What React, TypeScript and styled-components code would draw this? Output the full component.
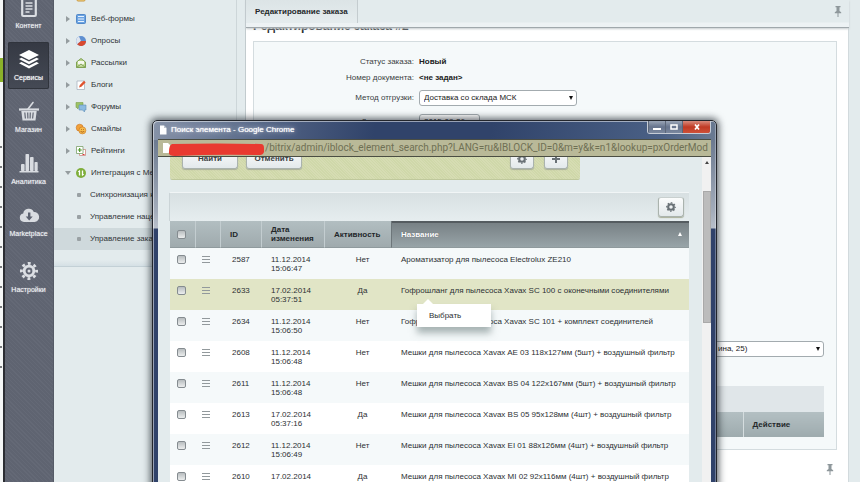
import React from "react";
import styled, { createGlobalStyle, css } from "styled-components";

const sans = `"Liberation Sans", Arial, sans-serif`;

const GlobalStyle = createGlobalStyle`
  *, *::before, *::after { box-sizing: border-box; }
  body { margin: 0; overflow: hidden; background: #e3ebed; color: #3b3f42; font: 8px/10px ${sans}; }
  button, input, select { font: inherit; color: inherit; }
`;

/* ---------- page shell ---------- */

const Page = styled.div`
  position: relative;
  display: flex;
  height: 100vh;
  overflow: hidden;
`;

const Desktop = styled.div`
  flex: none;
  width: 3px;
  background:
    linear-gradient(#8bb12a, #8bb12a) 0 58px / 3px 24px no-repeat,
    repeating-linear-gradient(transparent 0 14px, #77797c 14px 16px, transparent 16px 20px) 0 132px / 2px 250px no-repeat,
    #f4f6f6;
`;

/* ---------- dark rail ---------- */

const Rail = styled.nav`
  flex: none;
  display: flex;
  flex-direction: column;
  gap: 5px;
  width: 51px;
  padding: 0 4px 0 3px;
  border-left: 2px solid #2b2d33;
  border-right: 1px solid #565b67;
  background: repeating-linear-gradient(45deg, #646976 0 1px, #5f6471 1px 3px);
  overflow: hidden;
`;

const RailLink = styled.a<{ $active?: boolean; $apart?: boolean }>`
  flex: none;
  display: flex;
  flex-direction: column;
  align-items: center;
  gap: 3px;
  height: 47px;
  padding-top: 6px;
  border-radius: 2px;
  color: #eef0f3;
  font: 7px/10px ${sans};
  text-decoration: none;
  text-shadow: 0 0 1px #c9ccd3;
  &:first-child { margin-top: -10px; }
  ${(p) => p.$apart && css`margin-top: 4px;`}
  ${(p) =>
    p.$active &&
    css`
      color: #fff;
      background: linear-gradient(#353943, #454a55);
      box-shadow: inset 0 0 0 1px #30343c;
    `}
  svg { display: block; width: 22px; height: 22px; }
`;

/* ---------- menu tree ---------- */

const Menu = styled.nav`
  flex: none;
  width: 183px;
  border-right: 1px solid #cdd6d9;
  overflow: hidden;
`;

const Tree = styled.ul`
  margin: -14px 0 0;
  padding: 0 0 16px;
  list-style: none;
  border-bottom: 1px solid #c3d0d6;
  background: linear-gradient(#e3ebed calc(100% - 6px), #d5e0e5);
`;

const TreeItem = styled.li<{ $sub?: boolean; $selected?: boolean }>`
  height: 22px;
  background: ${(p) => (p.$selected ? "#cfd9dc" : "none")};
  a {
    display: grid;
    grid-template-columns: ${(p) => (p.$sub ? "6px 1fr" : "6px 10px 1fr")};
    column-gap: ${(p) => (p.$sub ? "7px" : "5px")};
    align-items: center;
    height: 22px;
    padding-left: ${(p) => (p.$sub ? "23px" : "11px")};
    color: #303437;
    text-decoration: none;
    white-space: nowrap;
  }
  svg { display: block; overflow: visible; }
`;

const Bullet = styled.span`
  width: 4px;
  height: 4px;
  border-radius: 1px;
  background: #9aa1a4;
`;

/* ---------- order editor ---------- */

const Main = styled.main`
  flex: 1;
  display: flex;
  flex-direction: column;
  min-width: 0;
  margin: 0 11px 0 8px;
  border-left: 1px solid #c2cbce;
`;

const TabBar = styled.header`
  flex: none;
  display: flex;
  justify-content: space-between;
  height: 28px;
  border-bottom: 1px solid #a0a8ac;
  background: linear-gradient(#e3ebed 22px, #edf2f4 23px);
  box-shadow: 0 1px 2px #c5cbce;
  z-index: 1;
`;

const Tab = styled.button`
  height: 23px;
  padding: 0 9px;
  border: 0;
  border-right: 1px solid #c4cccf;
  background: linear-gradient(#dce4e6, #e5ecee);
  color: #25282a;
  font-weight: bold;
`;

const PinButton = styled.button`
  display: block;
  width: 12px;
  height: 14px;
  margin: 4px 5px;
  padding: 0;
  border: 0;
  background: none;
  svg { display: block; }
`;

const Sheet = styled.section`
  flex: 1;
  min-height: 0;
  padding: 0 11px 0 7px;
  background: #fff;
  border-right: 1px solid #d2dadd;
  overflow: hidden;
`;

const Title = styled.h1`
  margin: -9px 0 8px;
  color: #2c2f31;
  font: bold 12px/14px ${sans};
`;

const Card = styled.div`
  display: flex;
  flex-direction: column;
  justify-content: space-between;
  height: 409px;
  padding: 12px 12px 12px 0;
  border: 1px solid #d4dcdf;
  background: #f5f9fa;
`;

const Fields = styled.div`
  display: grid;
  grid-template-columns: 160px max-content;
  grid-template-rows: 16px 16px 24px 24px;
  column-gap: 5px;
  align-items: center;
`;

const Label = styled.label`
  text-align: right;
`;

const Value = styled.b`
  color: #222;
`;

const SelectBox = styled.span<{ $fill?: boolean }>`
  position: relative;
  display: block;
  justify-self: start;
  ${(p) => p.$fill && css`margin-left: 405px;`}
  &::after {
    content: "";
    position: absolute;
    right: 4px;
    top: 6px;
    border: 2px solid transparent;
    border-top: 4px solid #111;
    border-bottom: 0;
  }
  select {
    display: block;
    width: ${(p) => (p.$fill ? "100%" : "auto")};
    height: 16px;
    padding: 0 14px 0 ${(p) => (p.$fill ? "58px" : "4px")};
    border: 1px solid #a3abaf;
    border-radius: 3px;
    background: #fff;
    color: #222;
    appearance: none;
  }
`;

const Wide = styled.span`
  select { width: 158px; }
`;

const Bottom = styled.div`
  display: flex;
  flex-direction: column;
  gap: 29px;
`;

const Goods = styled.table`
  width: calc(100% - 12px);
  margin-left: 12px;
  border-collapse: collapse;
  caption { height: 26px; background: #e0e6e9; }
  th {
    height: 25px;
    padding: 0 9px;
    background: linear-gradient(#b3bfc2, #9eabae);
    color: #25292b;
    font-weight: bold;
    text-align: left;
  }
  th + th { width: 81px; border-left: 1px solid #d5dddf; }
`;

const FooterPin = styled.div`
  display: flex;
  justify-content: flex-end;
  padding: 8px 0 0;
  margin-right: -4px;
`;

/* ---------- browser window ---------- */

const Window = styled.section`
  position: absolute;
  z-index: 2;
  top: 120px;
  left: 152px;
  right: 143px;
  bottom: -20px;
  display: flex;
  flex-direction: column;
  padding: 0 5px;
  border: 1px solid #23262c;
  border-radius: 5px 5px 0 0;
  background:
    linear-gradient(100deg, #8793a8 0, #4d5e80 130px, #30436a 220px, #30436a 60%, #4a6085 90%, #6b7b92 100%) 0 0 / 100% 19px no-repeat,
    linear-gradient(#6c7a90 19px, #a3acba 90px, #b8bfca 107px, #30426a 108px);
  box-shadow: 0 0 7px 2px rgba(20, 28, 36, 0.65), inset 1px 1px 0 rgba(255, 255, 255, 0.5), inset -1px 0 0 rgba(255, 255, 255, 0.3);
`;

const TitleBar = styled.header`
  flex: none;
  display: flex;
  align-items: center;
  gap: 4px;
  height: 18px;
  padding-left: 1px;
  color: #fff;
  svg { display: block; }
`;

const WindowTitle = styled.span`
  text-shadow: 0 0 1px #fff, 0 0 4px #b7c2d4, 0 0 8px #a4b1c8;
`;

const Controls = styled.div`
  display: flex;
  align-self: flex-start;
  margin-left: auto;
  border: 1px solid #c6ccd6;
  border-top: 0;
  border-radius: 0 0 3px 3px;
  overflow: hidden;
`;

const Control = styled.button<{ $close?: boolean }>`
  display: flex;
  align-items: center;
  justify-content: center;
  width: ${(p) => (p.$close ? "28px" : "17px")};
  height: 12px;
  padding: 0;
  border: 0;
  border-left: 1px solid #5c6779;
  background: ${(p) => (p.$close ? "linear-gradient(#d98b7c, #c03a24 50%, #cf5138)" : "linear-gradient(#9aa5b6, #66748d 50%, #7b889e)")};
`;

const Address = styled.div`
  flex: none;
  display: flex;
  align-items: center;
  height: 18px;
  padding-left: 4px;
  border: solid #4b4e43;
  border-width: 1px 0;
  background: #b9b998;
  color: #6f7054;
  font: 10px/14px Roboto, "Noto Sans", sans-serif;
  white-space: nowrap;
  overflow: hidden;
  svg { flex: none; }
`;

const Viewport = styled.div`
  flex: 1;
  display: flex;
  min-height: 0;
  background: #e3ebed;
  overflow: hidden;
`;

const Content = styled.div`
  flex: 1;
  min-width: 0;
  padding: 0 13px 0 12px;
`;

const Filter = styled.div`
  display: flex;
  gap: 8px;
  width: 79%;
  height: 22px;
  padding: 0 12px;
  border-radius: 0 0 2px 2px;
  background: repeating-linear-gradient(45deg, #d6dcb3 0 1px, #cfd8a9 1px 2px);
  box-shadow: 0 1px 0 #bfc89c;
`;

const PushButton = styled.button<{ $icon?: boolean }>`
  display: flex;
  align-items: center;
  justify-content: center;
  width: ${(p) => (p.$icon ? "24px" : "56px")};
  height: 20px;
  margin-top: -8px;
  padding: 0;
  border: 1px solid #aab3ae;
  border-top-color: #c9d0cf;
  border-radius: 3px;
  background: linear-gradient(#fbfcfc, #e3e9eb);
  box-shadow: 0 1px 1px #aab09a;
  color: #3c4144;
  font-weight: bold;
  svg { display: block; }
`;

const FilterTools = styled.div`
  display: flex;
  gap: 10px;
  margin-left: auto;
`;

const GridTools = styled.div`
  display: flex;
  align-items: center;
  justify-content: flex-end;
  height: 28px;
  margin-top: 14px;
  padding-right: 5px;
  background: linear-gradient(#d8e0e2, #e6edef);
  box-shadow: 0 -1px 0 #f1f5f6, -1px 0 0 #cbd4d7;
  ${PushButton} { width: 26px; margin-top: 0; }
`;

const Grid = styled.table`
  width: 100%;
  table-layout: fixed;
  border-collapse: separate;
  border-spacing: 0;
  background: #fff;
  line-height: 9px;
  col:nth-child(1) { width: 25px; }
  col:nth-child(2) { width: 25px; }
  col:nth-child(3) { width: 41px; }
  col:nth-child(4) { width: 63px; }
  col:nth-child(5) { width: 67px; }
`;

const Head = styled.th<{ $sorted?: boolean }>`
  height: 27px;
  padding: 0 0 0 9px;
  border-left: 1px solid #c3cdd0;
  border-bottom: 1px solid #8f9a9d;
  background: linear-gradient(#b2bec1, #9faaad);
  color: #23272a;
  text-align: left;
  &:first-child { padding-left: 7px; border-left: 0; }
  ${(p) =>
    p.$sorted &&
    css`
      border-left-color: #6d767a;
      background: linear-gradient(#555c60 2px, #788185 2px, #98a4a8);
      color: #fff;
    `}
`;

const SortButton = styled.button`
  display: flex;
  align-items: center;
  justify-content: space-between;
  width: 100%;
  padding: 0 7px 0 0;
  border: 0;
  background: none;
  font-weight: bold;
  text-shadow: 0 0 1px #4c5559;
  &::after {
    content: "";
    border: 2px solid transparent;
    border-bottom: 4px solid #fff;
    border-top: 0;
  }
`;

const Row = styled.tr<{ $selected?: boolean }>`
  height: 31px;
  &:nth-child(odd) { background: #f5f9fa; }
  ${(p) => p.$selected && css`&& { background: #e1e5c6; }`}
`;

const Cell = styled.td<{ $align?: string }>`
  position: relative;
  padding: 7px 0 0 10px;
  color: #2c3033;
  text-align: ${(p) => p.$align ?? "left"};
  vertical-align: top;
  &:first-child { padding-left: 7px; }
  &:nth-child(2) { padding-left: 7px; }
  &:nth-child(3) { padding-left: 12px; }
  white-space: nowrap;
`;

const Check = styled.input`
  display: block;
  width: 9px;
  height: 9px;
  margin: 0;
  border: 1px solid #858c90;
  border-radius: 2px;
  background: linear-gradient(#b8bdbf, #eceeee);
  appearance: none;
`;

const RowMenu = styled.button`
  display: block;
  width: 8px;
  height: 8px;
  margin-top: 1px;
  padding: 0;
  border: 0;
  background: repeating-linear-gradient(#92999c 0 1px, transparent 1px 3px);
`;

const Popover = styled.div`
  position: absolute;
  z-index: 1;
  top: 25px;
  left: 26px;
  width: 74px;
  background: #fff;
  box-shadow: 0 6px 7px rgba(90, 110, 110, 0.5);
  &::before {
    content: "";
    position: absolute;
    top: -5px;
    left: 6px;
    border: 5px solid transparent;
    border-bottom-color: #fff;
    border-top: 0;
  }
  button {
    display: block;
    width: 100%;
    height: 23px;
    padding: 0 12px;
    border: 0;
    background: none;
    text-align: left;
  }
`;

const ScrollTrack = styled.div`
  flex: none;
  display: flex;
  flex-direction: column;
  align-items: center;
  gap: 27px;
  width: 9px;
  padding-top: 4px;
  background: #f1f1f1;
  &::before {
    content: "";
    border: 2px solid transparent;
    border-bottom: 3px solid #444;
    border-top: 0;
  }
`;

const Thumb = styled.div`
  width: 8px;
  height: 132px;
  background: #bcbcbc;
  border: 1px solid #a9a9a9;
`;

/* ---------- drawings ---------- */

const Pin = () => (
  <svg width="12" height="14" viewBox="0 0 12 14" fill="#8e979b">
    <path d="M3.5 2h5v1.2h-1V7l1.7 1.3v1H2.8v-1L4.5 7V3.2h-1zM5.5 9h1v4h-1z" />
  </svg>
);

const Gear = () => (
  <svg width="10" height="10" viewBox="0 0 22 22" fill="none" stroke="#697176">
    <circle cx="11" cy="11" r="6.2" strokeWidth="4.6" />
    <circle cx="11" cy="11" r="9.4" strokeWidth="2.6" strokeDasharray="3.6 3.783" strokeDashoffset="1.8" />
  </svg>
);

const PageIcon = () => (
  <svg width="8" height="10" viewBox="0 0 8 10">
    <path d="M1 .5h4L7.5 3v6.5H1z" fill="#fff" />
    <path d="M5 .5V3h2.5z" fill="#bcc3cd" />
  </svg>
);

const railIcons: Record<string, React.ReactNode> = {
  content: (
    <svg viewBox="0 0 22 22">
      <rect x="4.2" y="2" width="13.6" height="18" rx="1" fill="none" stroke="#dadde2" strokeWidth="2.2" />
      <path d="M7.5 7h7M7.5 10h7M7.5 13h7M7.5 16h4" stroke="#dadde2" strokeWidth="1.4" />
    </svg>
  ),
  services: (
    <svg viewBox="0 0 22 22" fill="#fff">
      <path d="M11 2l10 5-10 5L1 7z" />
      <path d="M1 11l2.500-1.300L11 13.500l7.500-3.800L21 11l-10 5.200z" />
      <path d="M1 15.200l2.500-1.300L11 17.700l7.500-3.800 2.500 1.300-10 5.200z" />
    </svg>
  ),
  shop: (
    <svg viewBox="0 0 22 22" fill="none" stroke="#d9dce1">
      <path d="M1 9.500h20" strokeWidth="2.2" />
      <path d="M10 9l5-6.500" strokeWidth="1.6" strokeLinecap="round" />
      <path d="M3.300 11h15.400l-1.200 9.500h-13z" fill="#d9dce1" stroke="none" />
      <path d="M6.800 12.500l.6 6M9.700 12.500l.2 6M12.300 12.500l-.2 6M15.200 12.500l-.6 6" stroke="#626774" strokeWidth="1.2" />
    </svg>
  ),
  stats: (
    <svg viewBox="0 0 22 22" fill="#d9dce1">
      <rect x="3" y="12" width="3.6" height="7" rx=".8" />
      <rect x="7.5" y="2" width="3.6" height="17" rx=".8" />
      <rect x="12" y="5" width="3.6" height="14" rx=".8" />
      <rect x="16.500" y="10" width="3.2" height="9" rx=".8" />
      <path d="M1.500 19h19v1.500h-19z" />
    </svg>
  ),
  market: (
    <svg viewBox="0 0 22 22">
      <path d="M6 18a4.300 4.300 0 0 1-.8-8.500A5.600 5.600 0 0 1 15.800 8 5 5 0 0 1 16.500 18z" fill="#d9dce1" />
      <path d="M10 8.500h2.400v4h2.300L11.200 16.500 7.700 12.500H10z" fill="#5d6270" />
    </svg>
  ),
  settings: (
    <svg viewBox="0 0 22 22" fill="none" stroke="#dcdfe4">
      <circle cx="11" cy="11" r="4.8" strokeWidth="2.8" />
      <circle cx="11" cy="11" r="7.6" strokeWidth="2.8" strokeDasharray="2.900 3.069" strokeDashoffset="1.450" />
      <circle cx="11" cy="11" r="1.5" fill="#dcdfe4" stroke="none" />
    </svg>
  ),
};

const treeIcons: Record<string, React.ReactNode> = {
  plain: (
    <>
      <rect x="1" y="1" width="8" height="8" rx="1" fill="#f6dc8c" stroke="#c9953c" />
      <path d="M3 4h6" stroke="#fff" />
    </>
  ),
  forms: (
    <>
      <rect x=".5" y=".5" width="9" height="9" rx="1" fill="#6ba3e2" stroke="#5288c8" />
      <path d="M2 2.500h6M2 5h6M2 7.500h6" stroke="#e8f2fd" strokeWidth="1.2" />
    </>
  ),
  polls: (
    <>
      <circle cx="5" cy="5" r="5" fill="#5f8fd0" />
      <path d="M5 5L3 .5A5 5 0 0 0 1.200 8.200z" fill="#dfe5ef" />
      <path d="M5 5h5A5 5 0 0 1 1.200 8.200z" fill="#d8492f" />
    </>
  ),
  mail: (
    <>
      <path d="M.5 4L5 .5 9.500 4v5.500h-9z" fill="#b9d28d" stroke="#7fa252" />
      <path d="M2 3h6v3L5 7.500 2 6z" fill="#f6f8ee" />
      <path d="M.5 9.500L5 6l4.500 3.500" fill="none" stroke="#7fa252" />
    </>
  ),
  blogs: (
    <>
      <path d="M1 1h7.500v8.500H1z" fill="#fff" stroke="#a9b4c0" strokeWidth=".8" />
      <path d="M3 7.500L3.800 5 8 .8 9.600 2.500 5.400 6.700z" fill="#e0532f" />
    </>
  ),
  forums: (
    <>
      <path d="M0 .5h7v5H3L1.500 7V5.500H0z" fill="#9cc264" stroke="#7c9f4b" strokeWidth=".6" />
      <path d="M3 3h7v5H8.500v2L6.500 8H3z" fill="#8cbbe0" stroke="#5e8fb9" strokeWidth=".6" />
    </>
  ),
  smiles: (
    <>
      <circle cx="3.7" cy="3.7" r="3.5" fill="#f2a23a" stroke="#c97425" strokeWidth=".6" />
      <circle cx="6.4" cy="6.4" r="3.5" fill="#f6bd4d" stroke="#c97425" strokeWidth=".6" />
      <path d="M4.600 7a2 2 0 0 0 3.600 0" fill="none" stroke="#9c4b12" strokeWidth=".8" />
      <path d="M5.100 5h.8v.8h-.8zM7 5h.8v.8H7z" fill="#9c4b12" />
    </>
  ),
  ratings: (
    <>
      <path d="M3.500 3.500h6v6h-6z" fill="#fff" stroke="#c98c84" strokeWidth=".8" />
      <path d="M.5.5h6.500v7H.5z" fill="#fff" stroke="#7c9f6a" strokeWidth=".8" />
      <path d="M3.700 2v4M1.800 4h4" stroke="#4f9a2c" strokeWidth="1.2" />
      <path d="M6.500 8.500h2" stroke="#d33" />
    </>
  ),
  sync: (
    <>
      <circle cx="5" cy="5" r="5" fill="#7fae3b" />
      <path d="M3.500 2.500v5M6.500 2.500v5" stroke="#fff" strokeWidth="1.3" />
      <path d="M2.300 4l1.200-1.500M7.700 6L6.500 7.500" stroke="#fff" />
    </>
  ),
};

/* ---------- data ---------- */

const rail = [
  { icon: "content", text: "Контент" },
  { icon: "services", text: "Сервисы" },
  { icon: "shop", text: "Магазин" },
  { icon: "stats", text: "Аналитика" },
  { icon: "market", text: "Marketplace" },
  { icon: "settings", text: "Настройки" },
];

const tree = [
  { icon: "plain", text: "Валюты" },
  { icon: "forms", text: "Веб-формы" },
  { icon: "polls", text: "Опросы" },
  { icon: "mail", text: "Рассылки" },
  { icon: "blogs", text: "Блоги" },
  { icon: "forums", text: "Форумы" },
  { icon: "smiles", text: "Смайлы" },
  { icon: "ratings", text: "Рейтинги" },
  { icon: "sync", text: "Интеграция с Ме", open: true },
];

const subtree = ["Синхронизация к", "Управление наце", "Управление зака"];

const items = [
  { id: 2587, date: "11.12.2014", time: "15:06:47", active: "Нет", name: "Ароматизатор для пылесоса Electrolux ZE210" },
  { id: 2633, date: "17.02.2014", time: "05:37:51", active: "Да", name: "Гофрошланг для пылесоса Xavax SC 100 с оконечными соединителями" },
  { id: 2634, date: "11.12.2014", time: "15:06:50", active: "Нет", name: "Гофрошланг для пылесоса Xavax SC 101 + комплект соединителей" },
  { id: 2608, date: "11.12.2014", time: "15:06:48", active: "Нет", name: "Мешки для пылесоса Xavax AE 03 118х127мм (5шт) + воздушный фильтр" },
  { id: 2611, date: "11.12.2014", time: "15:06:48", active: "Нет", name: "Мешки для пылесоса Xavax BS 04 122х167мм (5шт) + воздушный фильтр" },
  { id: 2613, date: "17.02.2014", time: "05:37:16", active: "Да", name: "Мешки для пылесоса Xavax BS 05 95х128мм (4шт) + воздушный фильтр" },
  { id: 2612, date: "11.12.2014", time: "15:06:49", active: "Нет", name: "Мешки для пылесоса Xavax EI 01 88х126мм (4шт) + воздушный фильтр" },
  { id: 2610, date: "17.02.2014", time: "", active: "Да", name: "Мешки для пылесоса Xavax MI 02 92х116мм (4шт) + воздушный фильтр" },
];

const SearchWindow = () => (
  <Window aria-label="Поиск элемента">
    <TitleBar>
      <PageIcon />
      <WindowTitle>Поиск элемента - Google Chrome</WindowTitle>
      <Controls>
        <Control aria-label="Свернуть">
          <svg width="8" height="8"><path d="M0 5h8v2H0z" fill="#fff" /></svg>
        </Control>
        <Control aria-label="Развернуть">
          <svg width="8" height="8"><rect x="1" y="2" width="6" height="4" fill="none" stroke="#fff" strokeWidth="1.5" /></svg>
        </Control>
        <Control $close aria-label="Закрыть">
          <svg width="8" height="8"><path d="M2 1.500l4 5M6 1.500l-4 5" stroke="#fff" strokeWidth="1.7" /></svg>
        </Control>
      </Controls>
    </TitleBar>
    <Address>
      <svg width="103" height="16" viewBox="0 0 103 16">
        <path d="M1 3h5l2 2v8H1z" fill="#fff" />
        <path d="M10 4q44-1 89 0 3 0 3 4v4q-1 3-4 3-45-1-85 1-7 0-6-4 0-7 3-8z" fill="#e93a30" />
      </svg>
      /bitrix/admin/iblock_element_search.php?LANG=ru&amp;IBLOCK_ID=0&amp;m=y&amp;k=n1&amp;lookup=pxOrderMod
    </Address>
    <Viewport>
      <Content>
        <Filter>
          <PushButton>Найти</PushButton>
          <PushButton>Отменить</PushButton>
          <FilterTools>
            <PushButton $icon aria-label="Настроить фильтр"><Gear /></PushButton>
            <PushButton $icon aria-label="Добавить условие">
              <svg width="10" height="10"><path d="M5 1v8M1 5h8" stroke="#697176" strokeWidth="2" /></svg>
            </PushButton>
          </FilterTools>
        </Filter>
        <GridTools>
          <PushButton $icon aria-label="Настроить список"><Gear /></PushButton>
        </GridTools>
        <Grid>
          <colgroup><col /><col /><col /><col /><col /><col /></colgroup>
          <thead>
            <tr>
              <Head><Check type="checkbox" aria-label="Выбрать все" /></Head>
              <Head />
              <Head>ID</Head>
              <Head>Дата<br />изменения</Head>
              <Head>Активность</Head>
              <Head $sorted aria-sort="ascending"><SortButton>Название</SortButton></Head>
            </tr>
          </thead>
          <tbody>
            {items.map((item) => {
              const selected = item.id === 2633;
              return (
                <Row key={item.id} $selected={selected}>
                  <Cell><Check type="checkbox" aria-label={String(item.id)} /></Cell>
                  <Cell><RowMenu aria-label="Действия" /></Cell>
                  <Cell>{item.id}</Cell>
                  <Cell>{item.date}<br />{item.time}</Cell>
                  <Cell $align="center">{item.active}</Cell>
                  <Cell>
                    {item.name}
                    {selected && <Popover><button>Выбрать</button></Popover>}
                  </Cell>
                </Row>
              );
            })}
          </tbody>
        </Grid>
      </Content>
      <ScrollTrack><Thumb /></ScrollTrack>
    </Viewport>
  </Window>
);

export default function App() {
  return (
    <Page>
      <GlobalStyle />
      <Desktop />
      <Rail>
        {rail.map((r) => (
          <RailLink key={r.icon} href="#" $active={r.icon === "services"} $apart={r.icon === "settings"}>
            {railIcons[r.icon]}
            {r.text}
          </RailLink>
        ))}
      </Rail>
      <Menu>
        <Tree>
          {tree.map((t) => (
            <TreeItem key={t.text}>
              <a href="#">
                <svg width="6" height="6" viewBox="0 0 6 6" fill="#959c9f">
                  <path d={t.open ? "M0 1h6L3 5z" : "M1 0l4 3-4 3z"} />
                </svg>
                <svg width="10" height="10" viewBox="0 0 10 10">{treeIcons[t.icon]}</svg>
                {t.text}
              </a>
            </TreeItem>
          ))}
          {subtree.map((text) => (
            <TreeItem key={text} $sub $selected={text === "Управление зака"}>
              <a href="#"><Bullet />{text}</a>
            </TreeItem>
          ))}
        </Tree>
      </Menu>
      <Main>
        <TabBar>
          <Tab>Редактирование заказа</Tab>
          <PinButton aria-label="Закрепить вкладки"><Pin /></PinButton>
        </TabBar>
        <Sheet>
          <Title>Редактирование заказа #2</Title>
          <Card>
            <Fields>
              <Label as="span">Статус заказа:</Label>
              <Value>Новый</Value>
              <Label as="span">Номер документа:</Label>
              <Value>&lt;не задан&gt;</Value>
              <Label htmlFor="method">Метод отгрузки:</Label>
              <Wide>
                <SelectBox>
                  <select id="method"><option>Доставка со склада МСК</option></select>
                </SelectBox>
              </Wide>
              <Label htmlFor="date">Дата отгрузки:</Label>
              <SelectBox>
                <select id="date"><option>2015-09-26</option></select>
              </SelectBox>
            </Fields>
            <Bottom>
              <SelectBox $fill>
                <select aria-label="Адрес"><option>ина, 25)</option></select>
              </SelectBox>
              <Goods>
                <caption />
                <thead><tr><th /><th>Действие</th></tr></thead>
              </Goods>
            </Bottom>
          </Card>
          <FooterPin>
            <PinButton aria-label="Закрепить панель"><Pin /></PinButton>
          </FooterPin>
        </Sheet>
      </Main>
      <SearchWindow />
    </Page>
  );
}
